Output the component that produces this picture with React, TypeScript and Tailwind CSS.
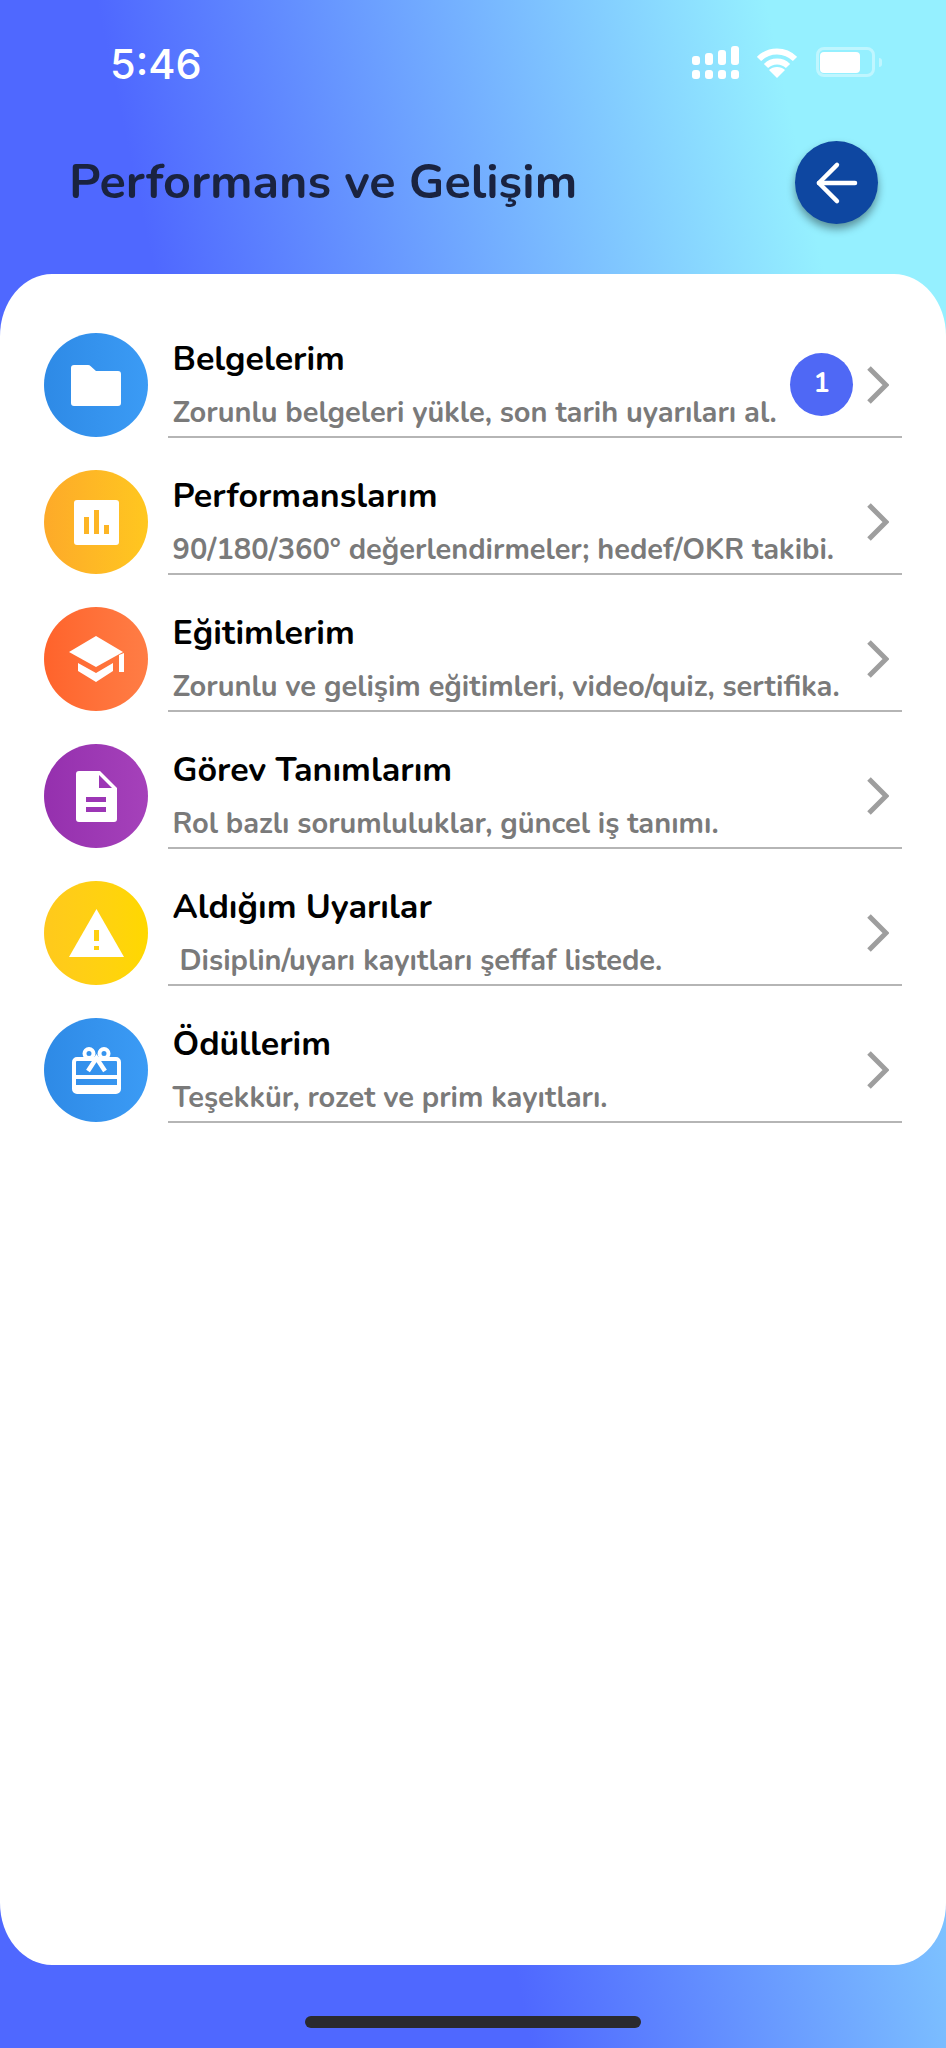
import { ArrowLeft } from "lucide-react";
import type { ReactNode } from "react";

const FolderIcon = () => (
  <svg width="50" height="41" viewBox="0 0 50 41" fill="#fff">
    <path d="M3 0h14c1 0 2 .4 2.700 1.200L25 6h22c2 0 3 1 3 3v29c0 2-1 3-3 3H3c-2 0-3-1-3-3V3c0-2 1-3 3-3z" />
  </svg>
);

const ChartIcon = () => (
  <svg width="45" height="45" viewBox="0 0 45 45">
    <rect width="45" height="45" rx="3" fill="#fff" />
    <rect x="10" y="17" width="5" height="17" fill="#fdb524" />
    <rect x="20" y="10" width="5" height="24" fill="#fdb524" />
    <rect x="30" y="25" width="5" height="9" fill="#fdb524" />
  </svg>
);

const CapIcon = () => (
  <svg width="55" height="46" viewBox="0 0 55 46" fill="#fff">
    <path d="M27 0 54 16 27 31 0 16z" />
    <path d="M9 27 27 37 44 27v8L27 46 9 35z" />
    <path d="M50 19l5-2v19h-5z" />
  </svg>
);

const DocIcon = () => (
  <svg width="41" height="51" viewBox="0 0 41 51">
    <path
      d="M3 0h21l17 17v31c0 2-1 3-3 3H3c-2 0-3-1-3-3V3c0-2 1-3 3-3z"
      fill="#fff"
    />
    <path d="M23 4v13h13z" fill="#9c36b5" />
    <rect x="10" y="26" width="20" height="5" fill="#9c36b5" />
    <rect x="10" y="36" width="20" height="5" fill="#9c36b5" />
  </svg>
);

const WarnIcon = () => (
  <svg width="55" height="48" viewBox="0 0 55 48">
    <path d="M27.500 0 55 48H0z" fill="#fff" />
    <rect x="25" y="21" width="5" height="11" fill="#ffd012" />
    <rect x="25" y="37" width="5" height="4" fill="#ffd012" />
  </svg>
);

const GiftIcon = () => (
  <svg width="49" height="47" viewBox="0 0 49 47" fill="none" stroke="#fff" strokeWidth="4">
    <rect x="2" y="12" width="45" height="33" rx="3" />
    <path d="M2 30h45" />
    <path d="M2 41h45" strokeWidth="6" />
    <path d="M16 24 24.500 11 33 24" strokeWidth="4.500" />
    <circle cx="17" cy="6.500" r="4.500" />
    <circle cx="32" cy="6.500" r="4.500" />
  </svg>
);

const Chevron = () => (
  <svg width="22" height="38" viewBox="0 0 22 38" fill="none" stroke="#9e9e9e" strokeWidth="5">
    <path d="M2 2 19 19 2 36" />
  </svg>
);

type Row = {
  title: string;
  desc: string;
  circle: string;
  icon: ReactNode;
  descClass?: string;
  badge?: number;
};

const rows: Row[] = [
  {
    title: "Belgelerim",
    desc: "Zorunlu belgeleri yükle, son tarih uyarıları al.",
    circle: "bg-gradient-to-r from-[#2e8ae6] to-[#3b9bf5]",
    icon: <FolderIcon />,
    badge: 1,
  },
  {
    title: "Performanslarım",
    desc: "90/180/360° değerlendirmeler; hedef/OKR takibi.",
    circle: "bg-gradient-to-r from-[#fdaa29] to-[#ffc71f]",
    icon: <ChartIcon />,
  },
  {
    title: "Eğitimlerim",
    desc: "Zorunlu ve gelişim eğitimleri, video/quiz, sertifika.",
    circle: "bg-gradient-to-r from-[#ff632b] to-[#ff7d45]",
    icon: <CapIcon />,
  },
  {
    title: "Görev Tanımlarım",
    desc: "Rol bazlı sorumluluklar, güncel iş tanımı.",
    circle: "bg-gradient-to-r from-[#9530ae] to-[#a541ba]",
    icon: <DocIcon />,
  },
  {
    title: "Aldığım Uyarılar",
    desc: "Disiplin/uyarı kayıtları şeffaf listede.",
    circle: "bg-gradient-to-r from-[#ffc91c] to-[#ffd800]",
    icon: <WarnIcon />,
    descClass: "pl-[7px]",
  },
  {
    title: "Ödüllerim",
    desc: "Teşekkür, rozet ve prim kayıtları.",
    circle: "bg-gradient-to-r from-[#2e8ae6] to-[#3b9bf5]",
    icon: <GiftIcon />,
  },
];

const StatusIcons = () => (
  <div className="flex items-start">
    <svg width="47" height="33" viewBox="0 0 47 33" fill="#fff">
      <rect x="0" y="10" width="8" height="9" rx="3" />
      <rect x="13" y="7" width="8" height="12" rx="3" />
      <rect x="26" y="4" width="8" height="15" rx="3" />
      <rect x="39" y="0" width="8" height="19" rx="3" />
      <rect x="0" y="24" width="8" height="9" rx="3" />
      <rect x="13" y="24" width="8" height="9" rx="3" />
      <rect x="26" y="24" width="8" height="9" rx="3" />
      <rect x="39" y="24" width="8" height="9" rx="3" />
    </svg>
    <svg className="ml-[18px] mt-[2px]" width="40" height="30" viewBox="0 0 40 30" fill="none" stroke="#fff" strokeWidth="6">
      <path d="M2 11C12 1 28 1 38 11" />
      <path d="M9 18c6-6 16-6 22 0" />
      <path d="M20 30 12 22c4-4 12-4 16 0z" fill="#fff" stroke="none" />
    </svg>
    <div className="ml-[19px] mt-[1px] flex items-center">
      <div className="flex h-[30px] w-[59px] items-center rounded-[8px] border-[3px] border-white/40 pl-[1px]">
        <div className="h-[21px] w-[40px] rounded-[4px] bg-white" />
      </div>
      <div className="ml-[4px] h-[9px] w-[3px] rounded-r-full bg-white/40" />
    </div>
  </div>
);

export default function App() {
  return (
    <div className="flex h-[2048px] w-[946px] flex-col overflow-hidden bg-[linear-gradient(78deg,#4f68ff_38.5%,#95f0ff_87%)] font-['Nunito','Lato','Noto_Sans',sans-serif]">
      {/* status bar */}
      <div className="flex h-[103px] shrink-0 items-start justify-between pl-[110px] pr-[64px] pt-[46px]">
        <span className="font-['Inter',sans-serif] text-[41.5px] leading-[36px] font-medium text-white">
          5:46
        </span>
        <StatusIcons />
      </div>

      {/* header */}
      <div className="flex h-[171px] shrink-0 items-start justify-between pl-[69px] pr-[68px] pt-[38px]">
        <h1 className="mt-[14px] text-[48.5px] leading-[54px] font-bold text-[#1a2340]">
          Performans ve Gelişim
        </h1>
        <button className="flex h-[83px] w-[83px] items-center justify-center rounded-full bg-[#0e47a1] shadow-[0_5px_9px_rgba(0,0,0,0.4)]">
          <ArrowLeft size={62} color="#fff" strokeWidth={1.7} />
        </button>
      </div>

      {/* list card */}
      <div className="h-[1691px] shrink-0 rounded-[52px/62px] bg-white pt-[27px]">
        {rows.map((row) => (
          <div key={row.title} className="flex h-[137px] items-end pl-[44px] pr-[44px]">
            <div
              className={`mb-[1px] flex h-[104px] w-[104px] shrink-0 items-center justify-center rounded-full ${row.circle}`}
            >
              {row.icon}
            </div>
            <div className="ml-[20px] flex h-[137px] flex-1 items-start border-b-2 border-[#b5b5b5] pl-[4.5px] pr-[13px]">
              <div className="min-w-0 flex-1 pt-[36.5px]">
                <div className="text-[34px] leading-[42px] font-bold text-black">{row.title}</div>
                <div className={`mt-[15px] text-[29px] leading-[36px] font-bold whitespace-nowrap text-[#7a7a7a] ${row.descClass ?? ""}`}>
                  {row.desc}
                </div>
              </div>
              <div className="mt-[52px] flex h-[63px] shrink-0 items-center">
                {row.badge ? (
                  <span className="mr-[14px] flex h-[63px] w-[63px] items-center justify-center rounded-full bg-[#4f68f5] text-[27px] font-bold text-white">
                    {row.badge}
                  </span>
                ) : null}
                <Chevron />
              </div>
            </div>
          </div>
        ))}
      </div>

      {/* home indicator */}
      <div className="flex flex-1 justify-center pt-[51px]">
        <div className="h-[12px] w-[336px] rounded-full bg-[#2a2a2e]" />
      </div>
    </div>
  );
}
